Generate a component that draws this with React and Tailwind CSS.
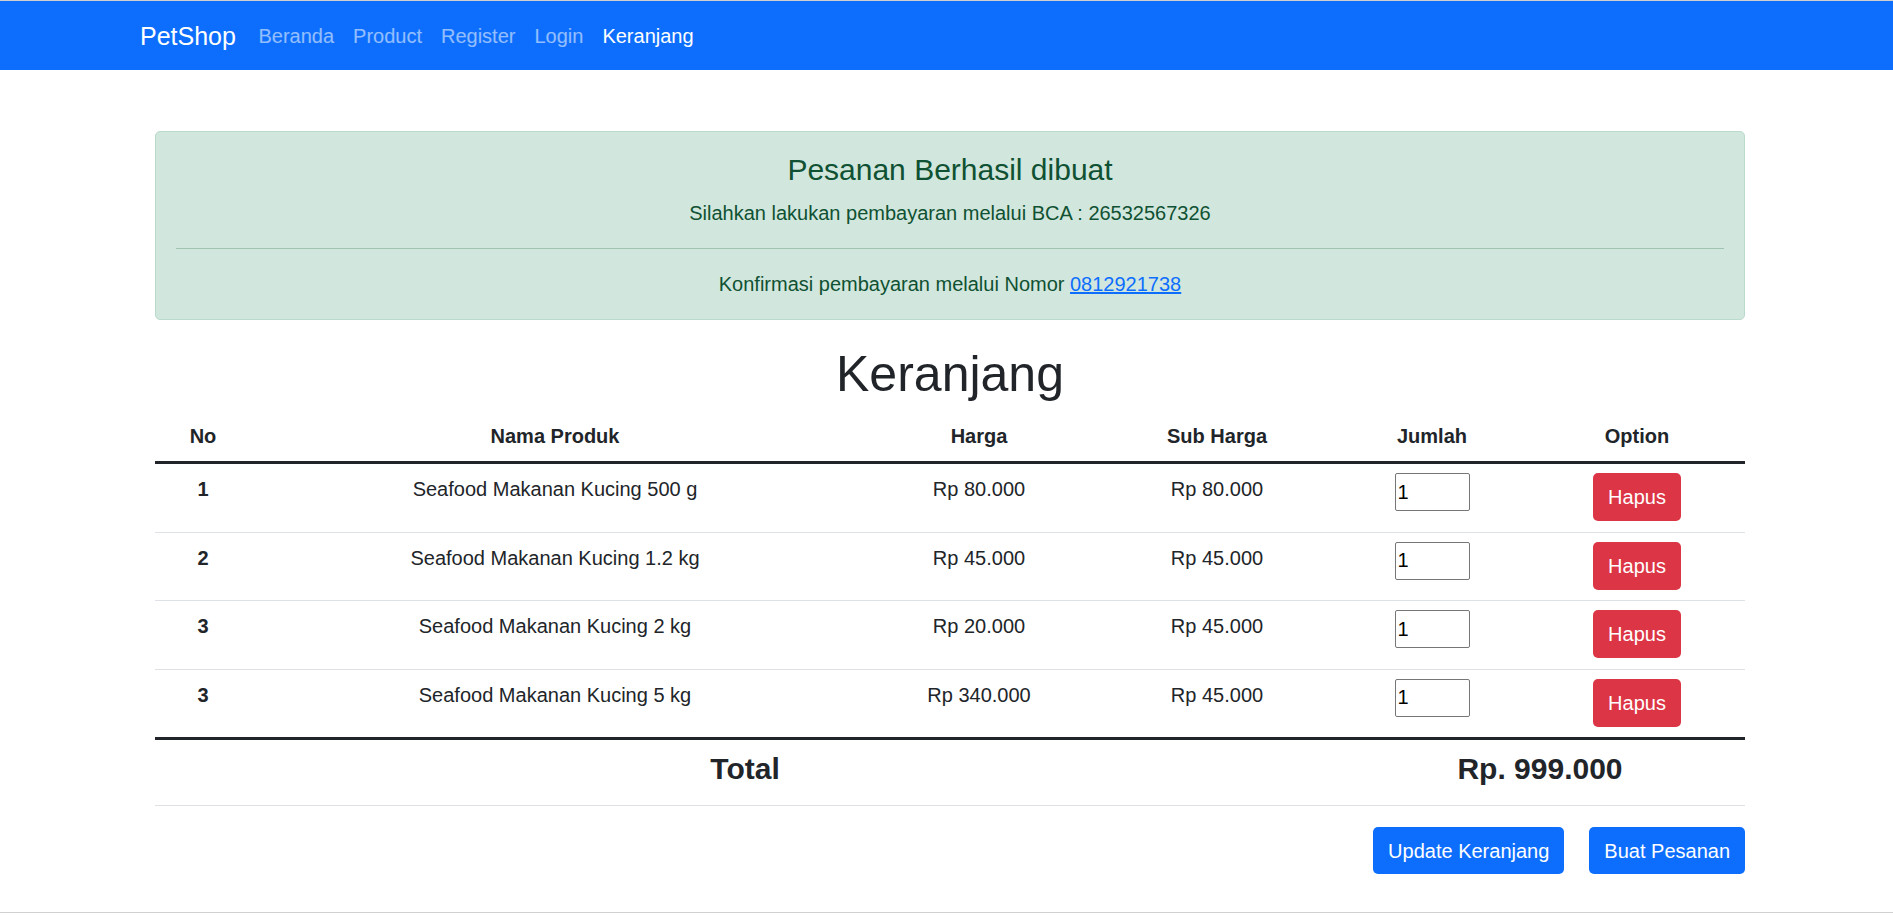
import React from 'react';

const items = [
    { no: 1, nama: 'Seafood Makanan Kucing 500 g', harga: 'Rp 80.000', sub: 'Rp 80.000' },
    { no: 2, nama: 'Seafood Makanan Kucing 1.2 kg', harga: 'Rp 45.000', sub: 'Rp 45.000' },
    { no: 3, nama: 'Seafood Makanan Kucing 2 kg', harga: 'Rp 20.000', sub: 'Rp 45.000' },
    { no: 3, nama: 'Seafood Makanan Kucing 5 kg', harga: 'Rp 340.000', sub: 'Rp 45.000' },
];

function Navbar() {
    const links = ['Beranda', 'Product', 'Register', 'Login'];
    return (
        <nav className="bg-[#0d6efd] border-t border-[#cfcfcf] h-[70px] flex items-center pl-[140px]">
            <a className="text-white text-[25px] mr-[13px] leading-[36px]">PetShop</a>
            <div className="flex items-center">
                {links.map((l) => (
                    <a key={l} className="px-[9.5px] text-[20px] leading-[30px] text-white/55">{l}</a>
                ))}
                <a className="px-[9.5px] text-[20px] leading-[30px] text-white">Keranjang</a>
            </div>
        </nav>
    );
}

function SuccessAlert() {
    return (
        <div className="mt-[61px] border border-[#badbcc] bg-[#d1e7dd] text-[#0f5132] rounded-[5px] p-[20px] text-center">
            <h4 className="text-[30px] leading-[36px] font-medium mb-[10px]">Pesanan Berhasil dibuat</h4>
            <p className="text-[20px] leading-[30px]">Silahkan lakukan pembayaran melalui BCA : 26532567326</p>
            <div className="h-px bg-[#a0c3b2] my-[20px]" />
            <p className="text-[20px] leading-[30px]">
                Konfirmasi pembayaran melalui Nomor <a className="text-[#0d6efd] underline">0812921738</a>
            </p>
        </div>
    );
}

export default function App() {
    return (
        <div className="min-h-[915px] bg-white text-[#212529]" style={{ fontFamily: '"Liberation Sans", Arial, sans-serif' }}>
            <Navbar />
            <div className="w-[1590px] ml-[155px]">
                <SuccessAlert />

                <h1 className="text-center text-[50px] leading-[60px] font-medium mt-[24px] mb-[7px]">Keranjang</h1>

                <table className="w-full table-fixed border-separate border-spacing-0 text-[20px]">
                    <colgroup>
                        <col className="w-[96px]" />
                        <col className="w-[608px]" />
                        <col className="w-[240px]" />
                        <col className="w-[236px]" />
                        <col className="w-[194px]" />
                        <col className="w-[216px]" />
                    </colgroup>
                    <thead>
                        <tr>
                            {['No', 'Nama Produk', 'Harga', 'Sub Harga', 'Jumlah', 'Option'].map((h) => (
                                <th key={h} className="py-[10px] px-[10px] leading-[30px] font-bold text-center border-b-[3px] border-[#212529]">
                                    {h}
                                </th>
                            ))}
                        </tr>
                    </thead>
                    <tbody>
                        {items.map((it, i) => {
                            const last = i === items.length - 1;
                            const cell = `pt-[10px] pb-[10.5px] px-[10px] leading-[30px] text-center align-top ${last ? 'border-b-[3px] border-[#212529]' : 'border-b border-[#dee2e6]'}`;
                            return (
                                <tr key={i}>
                                    <td className={`${cell} font-bold`}>{it.no}</td>
                                    <td className={cell}>{it.nama}</td>
                                    <td className={cell}>{it.harga}</td>
                                    <td className={cell}>{it.sub}</td>
                                    <td className={cell}>
                                        <input
                                            type="number"
                                            defaultValue={1}
                                            className="block mx-auto -mt-px w-[75px] h-[38px] border border-[#767676] rounded-[2px] px-[2px] text-[20px] leading-[30px] bg-white text-black [appearance:textfield]"
                                        />
                                    </td>
                                    <td className={cell}>
                                        <button className="block mx-auto -mt-px h-[48px] px-[15px] bg-[#dc3545] text-white rounded-[5px] text-[20px]">
                                            Hapus
                                        </button>
                                    </td>
                                </tr>
                            );
                        })}
                    </tbody>
                    <tfoot>
                        <tr>
                            <td colSpan={4} className="pt-[11px] pb-[11px] px-[10px] text-center border-b border-[#dee2e6]">
                                <h4 className="text-[30px] leading-[36px] font-semibold mb-[7px]">Total</h4>
                            </td>
                            <td colSpan={2} className="pt-[11px] pb-[11px] px-[10px] text-center border-b border-[#dee2e6]">
                                <h4 className="text-[30px] leading-[36px] font-semibold mb-[7px]">Rp. 999.000</h4>
                            </td>
                        </tr>
                    </tfoot>
                </table>

                <div className="flex justify-end gap-[25px] mt-[21px]">
                    <button className="h-[47px] px-[15px] bg-[#0d6efd] text-white rounded-[5px] text-[20px]">Update Keranjang</button>
                    <button className="h-[47px] px-[15px] bg-[#0d6efd] text-white rounded-[5px] text-[20px]">Buat Pesanan</button>
                </div>
            </div>
            <div className="mt-[38px] border-t border-[#d0d0d0]" />
        </div>
    );
}
